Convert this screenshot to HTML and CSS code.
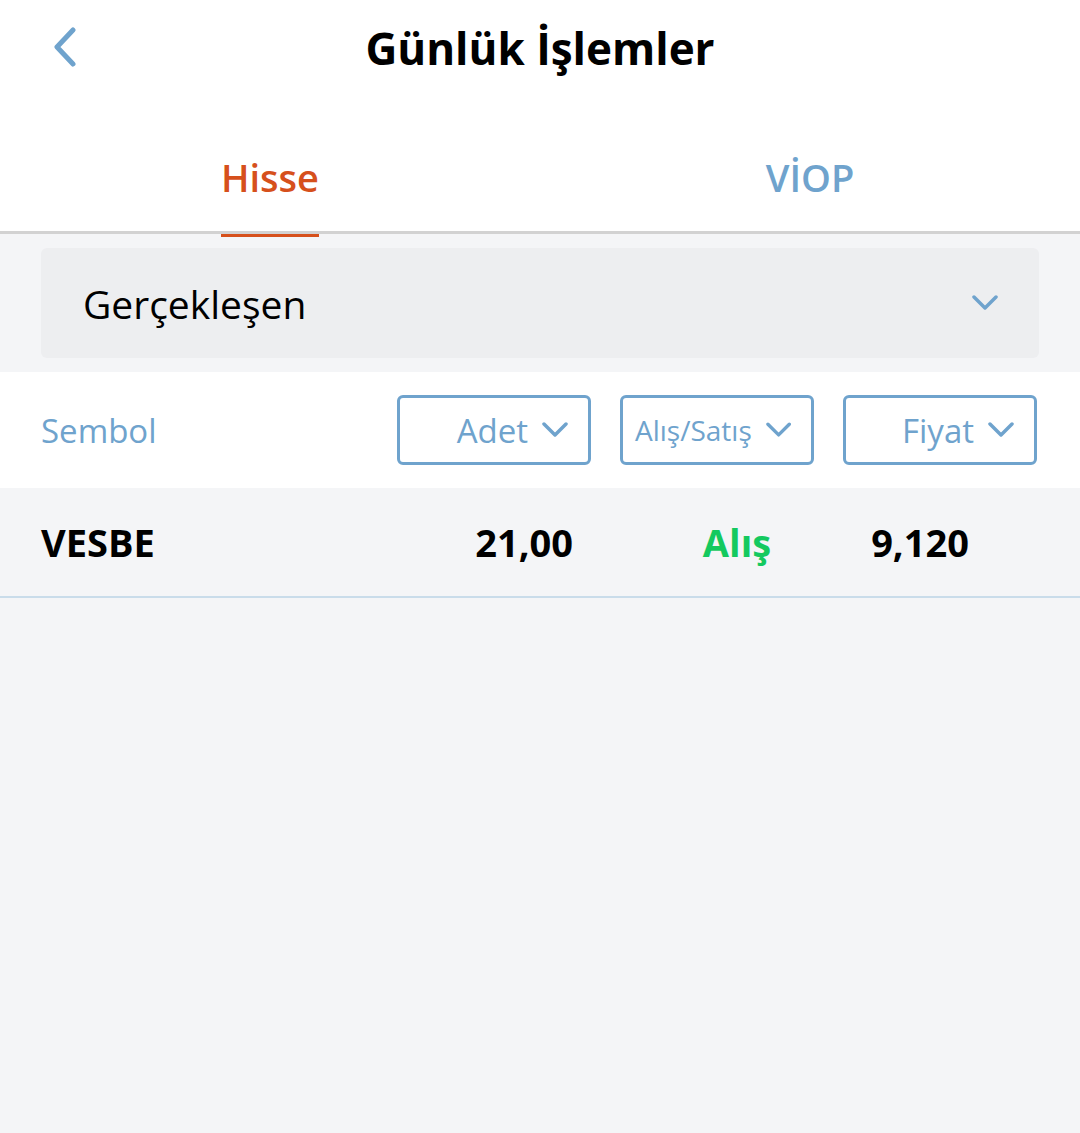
FILE: index.html
```html
<!DOCTYPE html>
<html lang="tr">
<head>
    <meta charset="UTF-8">
    <title>Günlük İşlemler</title>
    <link rel="stylesheet" href="styles.css">
</head>
<body>
    <div class="header">
        <span class="back">
            <svg width="26" height="40" viewBox="0 0 26 40"><path d="M21 3 L5 20 L21 37" fill="none" stroke="#6fa3cd" stroke-width="5" stroke-linecap="round" stroke-linejoin="round"/></svg>
        </span>
        <h1 class="title">Günlük İşlemler</h1>
    </div>
    <div class="tabs">
        <div class="tab active"><span>Hisse</span></div>
        <div class="tab"><span>VİOP</span></div>
    </div>
    <div class="select-wrap">
        <div class="select">
            <span>Gerçekleşen</span>
            <svg width="26" height="16" viewBox="0 0 26 16"><path d="M2 2 L13 13 L24 2" fill="none" stroke="#6fa3cd" stroke-width="3.5" stroke-linecap="round" stroke-linejoin="round"/></svg>
        </div>
    </div>
    <div class="filters">
        <div class="sym-label">Sembol</div>
        <div class="filter"><span>Adet</span><svg width="26" height="16" viewBox="0 0 26 16"><path d="M2 2 L13 13 L24 2" fill="none" stroke="#6fa3cd" stroke-width="3.5" stroke-linecap="round" stroke-linejoin="round"/></svg></div>
        <div class="filter small"><span>Alış/Satış</span><svg width="26" height="16" viewBox="0 0 26 16"><path d="M2 2 L13 13 L24 2" fill="none" stroke="#6fa3cd" stroke-width="3.5" stroke-linecap="round" stroke-linejoin="round"/></svg></div>
        <div class="filter"><span>Fiyat</span><svg width="26" height="16" viewBox="0 0 26 16"><path d="M2 2 L13 13 L24 2" fill="none" stroke="#6fa3cd" stroke-width="3.5" stroke-linecap="round" stroke-linejoin="round"/></svg></div>
    </div>
    <div class="row">
        <div class="sym">VESBE</div>
        <div class="cell qty">21,00</div>
        <div class="cell side buy">Alış</div>
        <div class="cell price">9,120</div>
    </div>
</body>
</html>
```

FILE: styles.css
```css
* {
    margin: 0;
    padding: 0;
    box-sizing: border-box;
}
html, body {
    height: 100%;
}
body {
    background: #f4f5f7;
    font-family: "Open Sans", "Noto Sans", sans-serif;
    color: #000;
}
.header {
    background: #fff;
    height: 110px;
    display: flex;
    align-items: center;
    justify-content: center;
    position: relative;
}
.back {
    position: absolute;
    left: 52px;
    top: 27px;
}
.title {
    font-size: 44px;
    font-weight: 700;
    margin-top: -14px;
}
.tabs {
    background: #fff;
    display: flex;
    height: 124px;
    border-bottom: 3px solid #d2d2d2;
}
.tab {
    flex: 1;
    display: flex;
    justify-content: center;
}
.tab span {
    font-size: 38px;
    font-weight: 600;
    color: #6fa3cd;
    padding-top: 41px;
    height: 124px;
    display: block;
}
.tab.active span {
    color: #d6501c;
    border-bottom: 3px solid #d6501c;
    margin-bottom: -3px;
    height: 127px;
}
.select-wrap {
    padding: 14px 41px 14px;
}
.select {
    background: #edeef0;
    border-radius: 6px;
    height: 110px;
    display: flex;
    align-items: center;
    justify-content: space-between;
    padding: 0 41px 0 42px;
    font-size: 39px;
}
.filters {
    background: #fff;
    height: 116px;
    display: flex;
    align-items: center;
    gap: 29px;
    padding: 0 43px 0 41px;
}
.sym-label {
    flex: 1;
    color: #6fa3cd;
    font-size: 33px;
}
.filter {
    width: 194px;
    height: 70px;
    border: 3px solid #6fa3cd;
    border-radius: 6px;
    display: flex;
    align-items: center;
    justify-content: flex-end;
    gap: 14px;
    padding: 0 20px 0 10px;
    color: #6fa3cd;
    font-size: 33px;
}
.filter.small {
    font-size: 28px;
    justify-content: space-between;
    padding-left: 12px;
}
.row {
    height: 110px;
    display: flex;
    align-items: center;
    gap: 29px;
    padding: 0 43px 0 41px;
    border-bottom: 2px solid #c9dcea;
    font-size: 38px;
    font-weight: 700;
}
.sym {
    flex: 1;
}
.cell {
    width: 194px;
}
.qty {
    text-align: right;
    padding-right: 18px;
}
.side {
    text-align: center;
    padding-left: 40px;
}
.buy {
    color: #14c95f;
}
.price {
    text-align: center;
    padding-right: 40px;
}
```
